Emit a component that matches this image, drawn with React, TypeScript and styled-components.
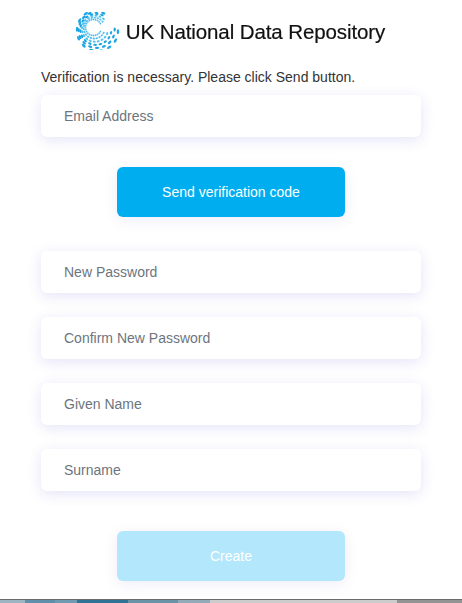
import styled, { createGlobalStyle } from 'styled-components';

const GlobalStyle = createGlobalStyle`
  html, body {
    margin: 0;
    padding: 0;
    background: #fff;
    overflow: hidden;
  }
`;

// swirl of dots for the logo: rings drift from the hole towards the lower right
const logoDots = (() => {
  const dots: { x: number; y: number; rx: number; ry: number; deg: number; color: string }[] = [];
  const rings = 6;
  for (let ring = 0; ring < rings; ring++) {
    const t = ring / (rings - 1);
    const cx = 93.5 + t * 4;
    const cy = 27.5 + t * 3;
    const radius = 8 + t * 12.5;
    const count = Math.round(24 - ring * 2);
    for (let i = 0; i < count; i++) {
      const deg = (i / count) * 360 + ring * 11 - 180;
      // white band runs out of the hole to the right, outer rings open further up
      const gapStart = -28 - t * 42;
      const gapEnd = 20 - t * 34;
      if (deg > gapStart && deg < gapEnd) continue;
      const a = (deg * Math.PI) / 180;
      dots.push({
        x: cx + radius * Math.cos(a),
        y: cy + radius * Math.sin(a),
        rx: 0.95 + t * 1.5,
        ry: 0.9 + t * 0.35,
        deg: deg + 90,
        color: t < 0.5 ? '#55c0ee' : '#1ea5e3',
      });
    }
  }
  return dots;
})();

const stripParts = [
  { width: 25, color: '#9db5c2' },
  { width: 30, color: '#5f8fab' },
  { width: 22, color: '#6f9ab2' },
  { width: 51, color: '#2f7396' },
  { width: 50, color: '#6a93a8' },
  { width: 32, color: '#93abb8' },
  { width: 187, color: '#cccccc' },
  { width: 65, color: '#949494' },
];

export default function App() {
  return (
    <Page>
      <GlobalStyle />
      <LogoRow>
        <LogoMark width="46" height="38" viewBox="75 12 46 38">
          {logoDots.map((d, i) => (
            <ellipse
              key={i}
              cx={d.x}
              cy={d.y}
              rx={d.rx}
              ry={d.ry}
              fill={d.color}
              transform={`rotate(${d.deg} ${d.x} ${d.y})`}
            />
          ))}
        </LogoMark>
        <LogoText>UK National Data Repository</LogoText>
      </LogoRow>
      <Form>
        <Intro>Verification is necessary. Please click Send button.</Intro>
        <Field placeholder="Email Address" />
        <ButtonRow $top={30} $bottom={34}>
          <ActionButton type="button">Send verification code</ActionButton>
        </ButtonRow>
        <FieldList>
          <Field placeholder="New Password" />
          <Field placeholder="Confirm New Password" />
          <Field placeholder="Given Name" />
          <Field placeholder="Surname" />
        </FieldList>
        <ButtonRow $top={40} $bottom={0}>
          <ActionButton type="button" disabled>
            Create
          </ActionButton>
        </ButtonRow>
      </Form>
      <BottomStrip>
        {stripParts.map((part, i) => (
          <StripPart key={i} $width={part.width} $color={part.color} />
        ))}
      </BottomStrip>
    </Page>
  );
}

const Page = styled.div`
  width: 462px;
  height: 603px;
  display: flex;
  flex-direction: column;
  background: #fff;
  font-family: 'Liberation Sans', Arial, sans-serif;
  overflow: hidden;
`;

const LogoRow = styled.div`
  height: 60px;
  padding: 2px 2px 0 0;
  box-sizing: border-box;
  display: flex;
  align-items: center;
  justify-content: center;
  gap: 5px;
`;

const LogoMark = styled.svg`
  flex: none;
  filter: blur(0.4px);
`;

const LogoText = styled.div`
  margin-top: 2px;
  font-size: 20.5px;
  letter-spacing: -0.1px;
  color: #111;
  white-space: nowrap;
  -webkit-text-stroke: 0.2px #111;
  filter: blur(0.25px);
`;

const Form = styled.div`
  display: flex;
  flex-direction: column;
  padding: 0 41px;
`;

const Intro = styled.div`
  height: 35px;
  padding-top: 9px;
  box-sizing: border-box;
  font-size: 14px;
  line-height: 16px;
  color: #333;
`;

const Field = styled.input`
  width: 380px;
  height: 42px;
  box-sizing: border-box;
  padding: 0 23px;
  border: none;
  outline: none;
  border-radius: 6px;
  background: #fff;
  font-family: inherit;
  font-size: 14px;
  color: #333;
  box-shadow: 0 3px 14px rgba(90, 80, 210, 0.16);

  &::placeholder {
    color: #6c757d;
    opacity: 1;
  }
`;

const FieldList = styled.div`
  display: flex;
  flex-direction: column;
  gap: 24px;
`;

const ButtonRow = styled.div<{ $top: number; $bottom: number }>`
  display: flex;
  justify-content: center;
  margin-top: ${(p) => p.$top}px;
  margin-bottom: ${(p) => p.$bottom}px;
`;

const ActionButton = styled.button`
  width: 228px;
  height: 50px;
  border: none;
  border-radius: 6px;
  background: #00aeef;
  color: #fff;
  font-family: inherit;
  font-size: 14px;
  box-shadow: 0 3px 14px rgba(90, 80, 210, 0.1);

  &:disabled {
    background: #b3e7fb;
  }
`;

const BottomStrip = styled.div`
  margin-top: auto;
  height: 4px;
  display: flex;
  border-top: 1px solid #6b6b6b;
  box-sizing: border-box;
`;

const StripPart = styled.div<{ $width: number; $color: string }>`
  width: ${(p) => p.$width}px;
  background: ${(p) => p.$color};
`;
